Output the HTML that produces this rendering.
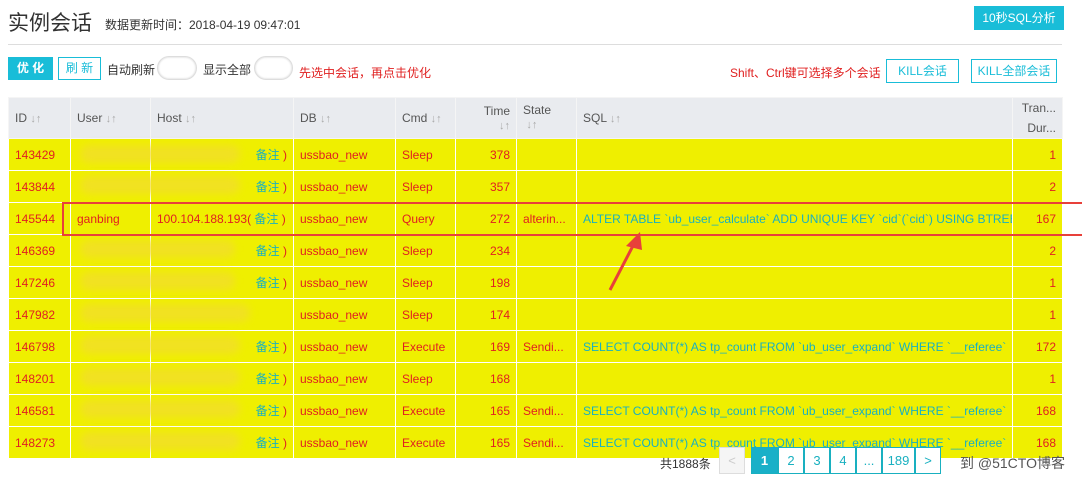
<!DOCTYPE html>
<html><head><meta charset="utf-8"><style>
*{margin:0;padding:0;box-sizing:border-box}
body{width:1082px;height:480px;background:#fff;font-family:"Liberation Sans","Noto Sans CJK SC",sans-serif;position:relative;overflow:hidden;font-size:12px;color:#333}
.a{position:absolute;white-space:nowrap}
table{position:absolute;left:8px;top:97px;border-collapse:collapse;table-layout:fixed;width:1054px}
td,th{border:1px solid #fff;height:32px;padding:0 6px;font-weight:normal;white-space:nowrap;overflow:hidden;font-size:12px}
th{background:#e9ebef;color:#555;height:41px;text-align:left;border-color:#f5f5f5}
td{background:#efef00;color:#e02020}
.r{text-align:right}.t{color:#19b0c0}
.s{color:#aaa;font-size:11px}
.blur{position:absolute;background:#f2dc30;border-radius:8px;filter:blur(4px);opacity:.7}
.tog{position:absolute;height:24px;border:1px solid #ddd;border-radius:12px;background:#fff;box-shadow:inset 0 0 2px #ccc}
.pg{position:absolute;top:447px;height:27px;border:1px solid #19b0c0;background:#fff;color:#19b0c0;text-align:center;line-height:25px;font-size:13px}
</style></head><body>
<div class="a" style="left:8px;top:7px;font-size:21px;color:#333">实例会话</div>
<div class="a" style="left:105px;top:16px;font-size:12px">数据更新时间：2018-04-19 09:47:01</div>
<div class="a" style="left:974px;top:6px;width:90px;height:24px;background:#19bdd8;color:#fff;text-align:center;line-height:24px;font-size:12px">10秒SQL分析</div>
<div class="a" style="left:8px;top:44px;width:1054px;height:1px;background:#ddd"></div>
<div class="a" style="left:8px;top:57px;width:45px;height:23px;background:#19bdd8;color:#fff;text-align:center;line-height:23px;font-weight:bold">优 化</div>
<div class="a" style="left:58px;top:57px;width:43px;height:23px;border:1px solid #19bdd8;color:#19bdd8;text-align:center;line-height:21px">刷 新</div>
<div class="a" style="left:107px;top:61px">自动刷新</div>
<div class="tog" style="left:157px;top:56px;width:40px"></div>
<div class="a" style="left:203px;top:61px">显示全部</div>
<div class="tog" style="left:254px;top:56px;width:39px"></div>
<div class="a" style="left:299px;top:64px;color:#e02020">先选中会话，再点击优化</div>
<div class="a" style="left:730px;top:64px;color:#e02020">Shift、Ctrl键可选择多个会话</div>
<div class="a" style="left:886px;top:59px;width:73px;height:24px;border:1px solid #19bdd8;color:#19bdd8;text-align:center;line-height:22px">KILL会话</div>
<div class="a" style="left:971px;top:59px;width:86px;height:24px;border:1px solid #19bdd8;color:#19bdd8;text-align:center;line-height:22px">KILL全部会话</div>
<table>
<colgroup><col style="width:62px"><col style="width:80px"><col style="width:143px"><col style="width:102px"><col style="width:60px"><col style="width:61px"><col style="width:60px"><col style="width:436px"><col style="width:50px"></colgroup>
<tr><th>ID <span class="s">↓↑</span></th><th>User <span class="s">↓↑</span></th><th>Host <span class="s">↓↑</span></th><th>DB <span class="s">↓↑</span></th><th>Cmd <span class="s">↓↑</span></th><th class="r">Time<br><span class="s">↓↑</span></th><th style="vertical-align:top;padding-top:5px">State<br>&nbsp;<span class="s">↓↑</span></th><th>SQL <span class="s">↓↑</span></th><th class="r" style="line-height:20px">Tran...<br>Dur...</th></tr>
<tr><td>143429</td><td></td><td class="r"><span class="t">备注</span> )</td><td>ussbao_new</td><td>Sleep</td><td class="r">378</td><td></td><td></td><td class="r">1</td></tr>
<tr><td>143844</td><td></td><td class="r"><span class="t">备注</span> )</td><td>ussbao_new</td><td>Sleep</td><td class="r">357</td><td></td><td></td><td class="r">2</td></tr>
<tr><td>145544</td><td>ganbing</td><td>100.104.188.193( <span class="t">备注</span> )</td><td>ussbao_new</td><td>Query</td><td class="r">272</td><td>alterin...</td><td class="t">ALTER TABLE `ub_user_calculate` ADD UNIQUE KEY `cid`(`cid`) USING BTREE</td><td class="r">167</td></tr>
<tr><td>146369</td><td></td><td class="r"><span class="t">备注</span> )</td><td>ussbao_new</td><td>Sleep</td><td class="r">234</td><td></td><td></td><td class="r">2</td></tr>
<tr><td>147246</td><td></td><td class="r"><span class="t">备注</span> )</td><td>ussbao_new</td><td>Sleep</td><td class="r">198</td><td></td><td></td><td class="r">1</td></tr>
<tr><td>147982</td><td></td><td class="r"></td><td>ussbao_new</td><td>Sleep</td><td class="r">174</td><td></td><td></td><td class="r">1</td></tr>
<tr><td>146798</td><td></td><td class="r"><span class="t">备注</span> )</td><td>ussbao_new</td><td>Execute</td><td class="r">169</td><td>Sendi...</td><td class="t">SELECT COUNT(*) AS tp_count FROM `ub_user_expand` WHERE `__referee`</td><td class="r">172</td></tr>
<tr><td>148201</td><td></td><td class="r"><span class="t">备注</span> )</td><td>ussbao_new</td><td>Sleep</td><td class="r">168</td><td></td><td></td><td class="r">1</td></tr>
<tr><td>146581</td><td></td><td class="r"><span class="t">备注</span> )</td><td>ussbao_new</td><td>Execute</td><td class="r">165</td><td>Sendi...</td><td class="t">SELECT COUNT(*) AS tp_count FROM `ub_user_expand` WHERE `__referee`</td><td class="r">168</td></tr>
<tr><td>148273</td><td></td><td class="r"><span class="t">备注</span> )</td><td>ussbao_new</td><td>Execute</td><td class="r">165</td><td>Sendi...</td><td class="t">SELECT COUNT(*) AS tp_count FROM `ub_user_expand` WHERE `__referee`</td><td class="r">168</td></tr>
</table>
<div class="blur" style="left:80px;top:145px;width:160px;height:18px"></div>
<div class="blur" style="left:80px;top:176px;width:160px;height:18px"></div>
<div class="blur" style="left:80px;top:240px;width:155px;height:18px"></div>
<div class="blur" style="left:80px;top:272px;width:155px;height:18px"></div>
<div class="blur" style="left:80px;top:304px;width:170px;height:18px"></div>
<div class="blur" style="left:80px;top:336px;width:160px;height:18px"></div>
<div class="blur" style="left:80px;top:368px;width:160px;height:18px"></div>
<div class="blur" style="left:80px;top:400px;width:160px;height:18px"></div>
<div class="blur" style="left:80px;top:432px;width:160px;height:18px"></div>
<div class="a" style="left:62px;top:202px;width:1030px;height:34px;border:2px solid #e8403a"></div>
<svg class="a" style="left:600px;top:228px" width="50" height="70"><line x1="10" y1="62" x2="36" y2="12" stroke="#e8403a" stroke-width="3"/><polygon points="40,4 26,18 42,22" fill="#e8403a"/></svg>
<div class="a" style="left:660px;top:455px;color:#333">共1888条</div>
<div class="pg" style="left:719px;width:26px;color:#ccc;border-color:#ddd;background:#f5f5f5">&lt;</div>
<div class="pg" style="left:751px;width:27px;background:#19b0c8;color:#fff;font-weight:bold">1</div>
<div class="pg" style="left:778px;width:26px">2</div>
<div class="pg" style="left:804px;width:26px">3</div>
<div class="pg" style="left:830px;width:26px">4</div>
<div class="pg" style="left:856px;width:26px">...</div>
<div class="pg" style="left:882px;width:33px">189</div>
<div class="pg" style="left:915px;width:26px">&gt;</div>
<div class="a" style="left:960px;top:453px;font-size:14px;color:#555">到 @51CTO博客</div>
</body></html>
